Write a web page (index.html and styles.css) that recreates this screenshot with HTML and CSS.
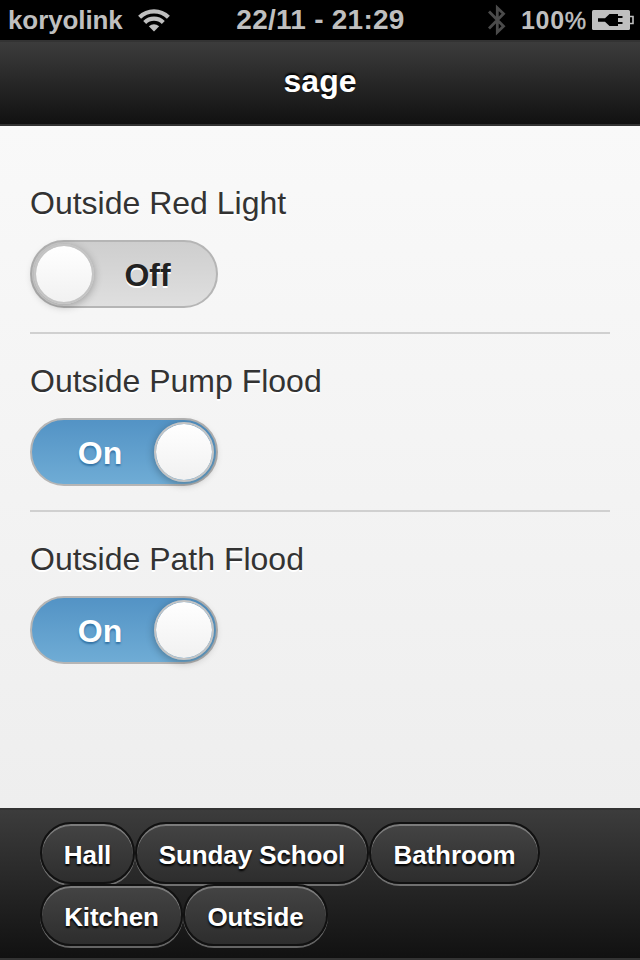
FILE: index.html
```html
<!DOCTYPE html>
<html lang="en">
<head>
<meta charset="utf-8">
<title>sage</title>
<link rel="stylesheet" href="styles.css">
</head>
<body>
<div class="status">
  <div class="status-left">
    <span class="carrier">koryolink</span>
    <svg class="wifi" width="32" height="24" viewBox="0 0 32 24">
      <g fill="none" stroke="#bfbfbf" stroke-width="4.2">
        <path d="M1.6 9.2A20.5 20.5 0 0 1 30.4 9.2"/>
        <path d="M6.7 14.5A13.2 13.2 0 0 1 25.3 14.5"/>
      </g>
      <path d="M10.8 18.3Q16 14 21.2 18.3L16 23.6z" fill="#bfbfbf"/>
    </svg>
  </div>
  <span class="clock">22/11 - 21:29</span>
  <div class="status-right">
    <svg class="bluetooth" width="18" height="32" viewBox="0 0 18 32">
      <path d="M1 7.5L15.5 22.3L9.3 28.2V3.8L15.5 9.7L1 24.5" fill="none" stroke="#4b4b4b" stroke-width="2.8"/>
    </svg>
    <span class="level">100<span class="percent">%</span></span>
    <svg class="battery" width="42" height="20" viewBox="0 0 42 20">
      <rect width="38" height="20" rx="1.5" fill="#bfbfbf"/>
      <path d="M38 6.5H41V13.5H38" fill="none" stroke="#bfbfbf" stroke-width="1.6"/>
      <path d="M6 8.2H13L17.5 4H26V6H30.5V8H26V12H30.5V14H26V16H17.5L13 11.8H6z" fill="#000"/>
    </svg>
  </div>
</div>
<header class="header"><h1>sage</h1></header>
<main class="content">
  <section class="field">
    <div class="label">Outside Red Light</div>
    <div class="switch off"><span class="text">Off</span><span class="knob"></span></div>
  </section>
  <section class="field">
    <div class="label">Outside Pump Flood</div>
    <div class="switch on"><span class="text">On</span><span class="knob"></span></div>
  </section>
  <section class="field">
    <div class="label">Outside Path Flood</div>
    <div class="switch on"><span class="text">On</span><span class="knob"></span></div>
  </section>
</main>
<footer class="footer">
  <nav class="row">
    <a class="btn hall">Hall</a><a class="btn sunday">Sunday School</a><a class="btn bathroom">Bathroom</a>
  </nav>
  <nav class="row">
    <a class="btn kitchen">Kitchen</a><a class="btn outside">Outside</a>
  </nav>
</footer>
</body>
</html>
```
FILE: styles.css
```css
* { box-sizing: border-box; }
body {
  margin: 0;
  width: 640px;
  height: 960px;
  overflow: hidden;
  display: flex;
  flex-direction: column;
  font-family: "Liberation Sans", Helvetica, Arial, sans-serif;
}
.status {
  height: 40px;
  flex: none;
  background: #000;
  color: #bfbfbf;
  display: grid;
  grid-template-columns: 1fr auto 1fr;
  align-items: center;
  font-weight: bold;
  white-space: nowrap;
}
.status-left, .status-right { display: flex; align-items: center; }
.status-left { padding-left: 8px; }
.status-right { justify-content: flex-end; padding-right: 6px; }
.carrier { width: 114px; font-size: 26px; letter-spacing: -.1px; }
.wifi { margin-left: 16px; }
.clock { font-size: 28px; letter-spacing: .25px; padding-left: 1px; }
.bluetooth { margin-right: 15px; }
.level { font-size: 25px; letter-spacing: .7px; width: 71px; }
.percent { font-weight: normal; font-size: 24px; letter-spacing: 0; -webkit-text-stroke: .5px #bfbfbf; }
.header {
  height: 86px;
  flex: none;
  border: solid #333;
  border-width: 2px 0;
  background: linear-gradient(#3c3c3c, #111);
  display: flex;
  align-items: center;
  justify-content: center;
}
h1 {
  margin: 0;
  padding-bottom: 5px;
  color: #fff;
  font-size: 32px;
  line-height: 40px;
  text-shadow: 0 -2px 2px #000;
}
.content {
  flex: 1;
  padding: 30px 30px 0;
  background: linear-gradient(#f9f9f9, #eee);
}
.field { height: 178px; padding-top: 26px; border-bottom: 2px solid #d0d0d0; }
.field:last-child { border: 0; }
.label {
  height: 58px;
  padding-top: 3px;
  font-size: 32px;
  line-height: 36px;
  color: #333;
  text-shadow: 0 2px 0 #fff;
}
.switch {
  width: 188px;
  height: 68px;
  padding: 2px;
  border: 2px solid #b5b5b5;
  border-radius: 34px;
  display: flex;
  align-items: center;
  font-size: 32px;
  font-weight: bold;
}
.off { flex-direction: row-reverse; background: linear-gradient(#cecece, #dfdfdf); color: #222; text-shadow: 0 2px 0 #fff; }
.on { background: linear-gradient(#5393c5, #6facd5); color: #fff; text-shadow: 0 2px 2px #3373a5; }
.text { flex: 1; text-align: center; padding-top: 3px; }
.off .text { padding-right: 13px; }
.on .text { padding-left: 12px; }
.knob {
  width: 60px;
  height: 60px;
  border: 2px solid #c4c4c4;
  border-radius: 50%;
  background: linear-gradient(#fff, #f1f1f1);
  background-clip: padding-box;
  box-shadow: 0 2px 8px rgba(0,0,0,.3);
}
.footer {
  height: 152px;
  flex: none;
  padding: 12px 40px 0;
  border: solid #333;
  border-width: 2px 0;
  background: linear-gradient(#3c3c3c, #111);
}
.row { display: flex; height: 62px; }
.btn {
  height: 62px;
  flex: none;
  border: 2px solid #111;
  border-radius: 31px;
  background: linear-gradient(#444, #2d2d2d);
  box-shadow: inset 0 2px 0 rgba(255,255,255,.3), 0 2px 0 rgba(255,255,255,.34);
  color: #fff;
  font-size: 26px;
  letter-spacing: -.1px;
  line-height: 60px;
  font-weight: bold;
  text-align: center;
  text-shadow: 0 2px 2px #000;
  padding-top: 1px;
}
.hall { width: 95px; }
.sunday { width: 234px; }
.bathroom { width: 171px; }
.kitchen { width: 143px; }
.outside { width: 145px; }
```
